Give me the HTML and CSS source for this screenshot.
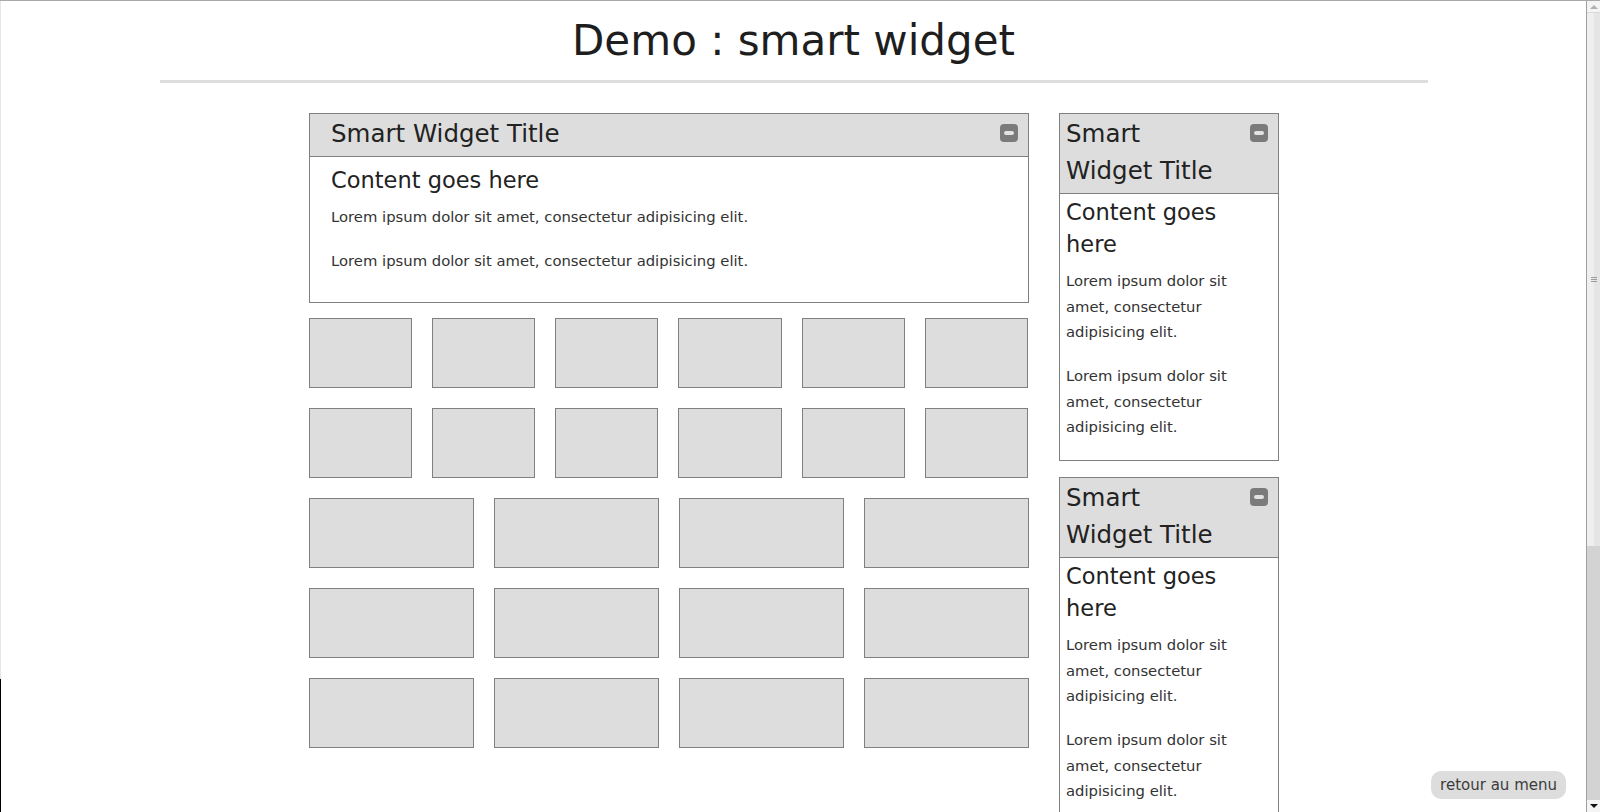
FILE: index.html
```html
<!DOCTYPE html>
<html lang="fr">
<head>
<meta charset="utf-8">
<title>Demo : smart widget</title>
<link rel="stylesheet" href="styles.css">
</head>
<body>
<div class="edge"></div>
<div class="page">
  <h1 class="page-title">Demo : smart widget</h1>
  <hr class="rule">
  <div class="layout">
    <div class="main-col">
      <section class="widget">
        <div class="widget-head">
          <h2 class="widget-title">Smart Widget Title</h2>
          <span class="collapse"><svg width="18" height="18" viewBox="0 0 18 18"><rect x="0" y="0" width="18" height="18" rx="4" fill="#7b7b7b"/><rect x="4" y="7" width="10" height="4" rx="2" fill="#e2e2e2"/></svg></span>
        </div>
        <div class="widget-body">
          <h3 class="content-title">Content goes here</h3>
          <p class="text">Lorem ipsum dolor sit amet, consectetur adipisicing elit.</p>
          <p class="text">Lorem ipsum dolor sit amet, consectetur adipisicing elit.</p>
        </div>
      </section>
      <div class="tiles">
        <div class="tile-row"><div class="tile"></div><div class="tile"></div><div class="tile"></div><div class="tile"></div><div class="tile"></div><div class="tile"></div></div>
        <div class="tile-row"><div class="tile"></div><div class="tile"></div><div class="tile"></div><div class="tile"></div><div class="tile"></div><div class="tile"></div></div>
        <div class="tile-row"><div class="tile"></div><div class="tile"></div><div class="tile"></div><div class="tile"></div></div>
        <div class="tile-row"><div class="tile"></div><div class="tile"></div><div class="tile"></div><div class="tile"></div></div>
        <div class="tile-row"><div class="tile"></div><div class="tile"></div><div class="tile"></div><div class="tile"></div></div>
      </div>
    </div>
    <div class="side-col">
      <section class="widget">
        <div class="widget-head">
          <h2 class="widget-title">Smart Widget Title</h2>
          <span class="collapse"><svg width="18" height="18" viewBox="0 0 18 18"><rect x="0" y="0" width="18" height="18" rx="4" fill="#7b7b7b"/><rect x="4" y="7" width="10" height="4" rx="2" fill="#e2e2e2"/></svg></span>
        </div>
        <div class="widget-body">
          <h3 class="content-title">Content goes here</h3>
          <p class="text">Lorem ipsum dolor sit amet, consectetur adipisicing elit.</p>
          <p class="text">Lorem ipsum dolor sit amet, consectetur adipisicing elit.</p>
        </div>
      </section>
      <section class="widget">
        <div class="widget-head">
          <h2 class="widget-title">Smart Widget Title</h2>
          <span class="collapse"><svg width="18" height="18" viewBox="0 0 18 18"><rect x="0" y="0" width="18" height="18" rx="4" fill="#7b7b7b"/><rect x="4" y="7" width="10" height="4" rx="2" fill="#e2e2e2"/></svg></span>
        </div>
        <div class="widget-body">
          <h3 class="content-title">Content goes here</h3>
          <p class="text">Lorem ipsum dolor sit amet, consectetur adipisicing elit.</p>
          <p class="text">Lorem ipsum dolor sit amet, consectetur adipisicing elit.</p>
        </div>
      </section>
    </div>
  </div>
</div>
<div class="scrollbar">
  <div class="sb-up"><span class="tri-up"></span></div>
  <div class="sb-thumb"><span class="grip"></span></div>
  <div class="sb-track"></div>
  <div class="sb-down"><span class="tri-down"></span></div>
</div>
<a class="back-btn" href="#">retour au menu</a>
</body>
</html>
```

FILE: styles.css
```css
* { box-sizing: border-box; }
html, body { height: 100%; }
html { overflow: hidden; }
body {
  margin: 0;
  display: flex;
  height: 812px;
  overflow: hidden;
  border-top: 1px solid #a9a9a9;
  background: #fff;
  font-family: "DejaVu Sans", sans-serif;
  color: #222;
}
.edge {
  width: 1px;
  flex: none;
  background: linear-gradient(#e6e6e6 0, #e6e6e6 678px, #000 678px);
}
.page {
  flex: 1;
  min-width: 0;
  overflow: hidden;
}
.page-title {
  margin: 15px 0 15px;
  font-size: 42px;
  line-height: 49px;
  font-weight: normal;
  text-align: center;
  color: #1e1e1e;
}
.rule {
  width: 80%;
  height: 3px;
  margin: 0 auto 30px;
  border: 0;
  background: #dddddd;
}
.layout {
  width: 970px;
  margin: 0 auto;
  display: flex;
  gap: 30px;
  align-items: flex-start;
}
.main-col { width: 720px; flex: none; }
.side-col { width: 220px; flex: none; }
.widget {
  position: relative;
  border: 1px solid #808080;
  margin-bottom: 15px;
  background: #fff;
}
.side-col .widget { margin-bottom: 16px; }
.widget-head {
  position: relative;
  background: #dddddd;
  border-bottom: 1px solid #808080;
  padding: 1px 50px 4px 3%;
}
.widget-title {
  margin: 0;
  font-size: 24.5px;
  line-height: 37px;
  font-weight: normal;
  color: #222;
}
.collapse {
  position: absolute;
  top: 10px;
  right: 10px;
  width: 18px;
  height: 18px;
  display: block;
}
.collapse svg { display: block; }
.widget-body {
  padding: 1% 3% calc(1.6% - 2px);
}
.content-title {
  margin: 0 0 8px;
  font-size: 22.5px;
  line-height: 32px;
  font-weight: normal;
  color: #222;
}
.text {
  margin: 0 0 18.6px;
  font-size: 14.8px;
  line-height: 25.5px;
  color: #333;
}
.tiles {
  display: flex;
  flex-direction: column;
  gap: 20px;
}
.tile-row {
  display: flex;
  gap: 20px;
}
.tile {
  flex: 1;
  height: 70px;
  background: #dddddd;
  border: 1px solid #808080;
}
.scrollbar {
  width: 14px;
  flex: none;
  border-left: 1px solid #a0a0a0;
  display: flex;
  flex-direction: column;
  background: #f0f0f0;
}
.sb-up {
  height: 12px;
  flex: none;
  display: flex;
  justify-content: center;
  align-items: center;
  background: #f4f4f4;
  border-bottom: 1px solid #d8d8d8;
}
.tri-up {
  width: 0; height: 0;
  border-left: 4px solid transparent;
  border-right: 4px solid transparent;
  border-bottom: 4px solid #b0b0b0;
}
.sb-thumb {
  height: 533px;
  flex: none;
  display: flex;
  justify-content: center;
  align-items: center;
  background: linear-gradient(90deg, #efefef 0, #efefef 7px, #e5e5e5 7px);
}
.grip {
  width: 6px;
  height: 5px;
  border-top: 1px solid #9a9a9a;
  border-bottom: 1px solid #9a9a9a;
  background: linear-gradient(#fff0 0, #fff0 1px, #9a9a9a 1px, #9a9a9a 2px, #fff0 2px);
}
.sb-track {
  flex: 1;
  background: #d3d3d3;
}
.sb-down {
  height: 12px;
  flex: none;
  display: flex;
  justify-content: center;
  align-items: center;
  background: #f4f4f4;
}
.tri-down {
  width: 0; height: 0;
  border-left: 4px solid transparent;
  border-right: 4px solid transparent;
  border-top: 4px solid #111;
}
.back-btn {
  position: fixed;
  right: 34px;
  bottom: 13px;
  height: 28px;
  padding: 0 9px;
  border-radius: 10px;
  background: #dddddd;
  color: #3c3c3c;
  font-family: "DejaVu Sans", sans-serif;
  font-size: 15px;
  line-height: 28px;
  text-decoration: none;
}
```
